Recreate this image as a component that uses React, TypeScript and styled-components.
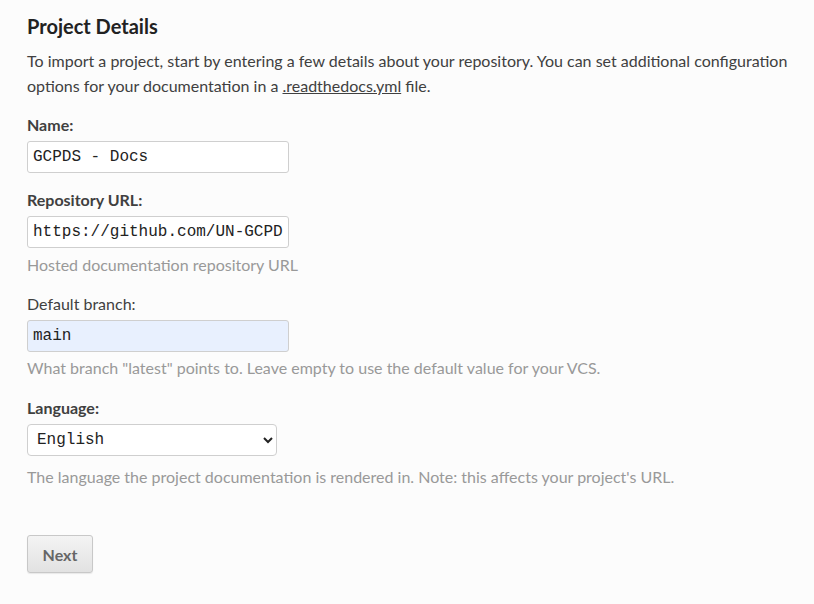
import React from "react";
import styled, { createGlobalStyle } from "styled-components";

const Global = createGlobalStyle`
  html, body {
    margin: 0;
    padding: 0;
    background: #fcfcfc;
  }
  body {
    font-family: Lato, "Noto Sans", sans-serif;
    font-size: 16px;
    color: #404040;
  }
`;

const Page = styled.div`
  padding: 12px 14px 30px 27px;
`;

const Title = styled.h1`
  margin: 0 0 8px 0;
  font-size: 20px;
  line-height: 28px;
  font-weight: 700;
  color: #222;
`;

const Intro = styled.p`
  margin: 0 0 15px 0;
  font-size: 16px;
  line-height: 25px;
  color: #404040;
`;

const Link = styled.a`
  color: #404040;
  text-decoration: underline;
`;

const Field = styled.div<{ $gap?: number }>`
  display: flex;
  flex-direction: column;
  align-items: flex-start;
  margin-top: ${(p) => (p.$gap ?? 15)}px;
`;

const Label = styled.label<{ $bold?: boolean }>`
  font-size: 16px;
  line-height: 24px;
  font-weight: ${(p) => (p.$bold ? 700 : 400)};
  color: #404040;
  margin-bottom: 4px;
`;

const TextInput = styled.input<{ $filled?: boolean }>`
  box-sizing: border-box;
  width: 262px;
  height: 32px;
  margin: 0;
  padding: 0 5px;
  font-family: "Liberation Mono", monospace;
  font-size: 16px;
  color: #222;
  background: ${(p) => (p.$filled ? "#e8f0fe" : "#ffffff")};
  border: 1px solid #cfcfcf;
  border-radius: 3px;
  outline: none;
`;

const Select = styled.select`
  box-sizing: border-box;
  width: 250px;
  height: 32px;
  margin: 0;
  padding: 0 4px 0 5px;
  font-family: "Liberation Mono", monospace;
  font-size: 16px;
  color: #222;
  background: #ffffff;
  border: 1px solid #cfcfcf;
  border-radius: 4px;
  outline: none;
`;

const Help = styled.div<{ $top?: number }>`
  font-size: 16px;
  line-height: 24px;
  color: #999;
  margin-top: ${(p) => (p.$top ?? 5)}px;
`;

const Actions = styled.div`
  margin-top: 46px;
`;

const Button = styled.button`
  box-sizing: border-box;
  width: 66px;
  height: 38px;
  padding: 0;
  font-family: Lato, sans-serif;
  font-size: 16px;
  font-weight: 700;
  color: #666;
  background: linear-gradient(#f4f4f4, #e2e2e2);
  border: 1px solid #c8c8c8;
  border-radius: 3px;
  box-shadow: 0 1px 1px rgba(0, 0, 0, 0.08);
`;

export default function App() {
  return (
    <>
      <Global />
      <Page>
        <Title>Project Details</Title>
        <Intro>
          To import a project, start by entering a few details about your repository. You can set additional
          configuration options for your documentation in a <Link href="#">.readthedocs.yml</Link> file.
        </Intro>

        <Field $gap={0}>
          <Label $bold>Name:</Label>
          <TextInput defaultValue="GCPDS - Docs" />
        </Field>

        <Field>
          <Label $bold>Repository URL:</Label>
          <TextInput defaultValue="https://github.com/UN-GCPDS/docs" />
          <Help>Hosted documentation repository URL</Help>
        </Field>

        <Field $gap={15}>
          <Label>Default branch:</Label>
          <TextInput $filled defaultValue="main" />
          <Help $top={4}>What branch "latest" points to. Leave empty to use the default value for your VCS.</Help>
        </Field>

        <Field $gap={16}>
          <Label $bold>Language:</Label>
          <Select defaultValue="en">
            <option value="en">English</option>
          </Select>
          <Help $top={9}>The language the project documentation is rendered in. Note: this affects your project's URL.</Help>
        </Field>

        <Actions>
          <Button type="button">Next</Button>
        </Actions>
      </Page>
    </>
  );
}
